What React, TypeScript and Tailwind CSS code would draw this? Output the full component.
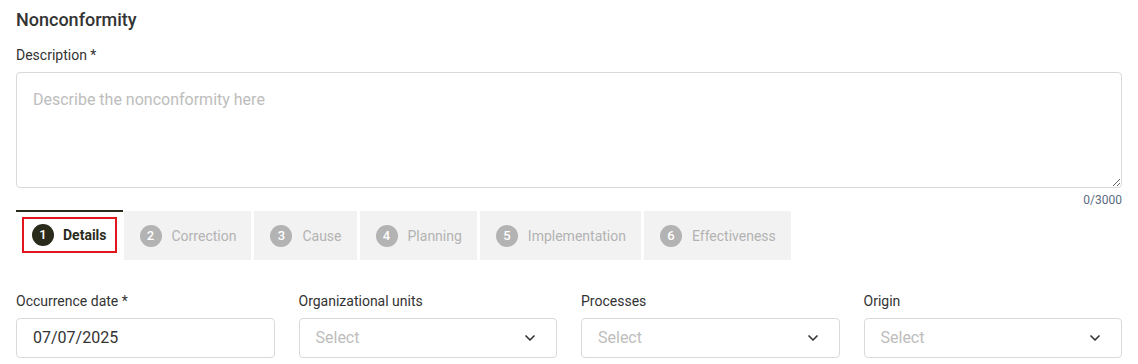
import { ChevronDown } from "lucide-react"

const steps = ["Details", "Correction", "Cause", "Planning", "Implementation", "Effectiveness"]

const SelectBox = ({ label }: { label: string }) => (
   <div className="flex flex-col">
      <label className="text-sm leading-5 text-[#333] mb-[7px]">{label}</label>
      <div className="h-10 border border-[#d9d9d9] rounded flex items-center justify-between pl-4 pr-[18px]">
         <span className="text-base text-[#bdbdbd]">Select</span>
         <ChevronDown size={16} strokeWidth={2.5} className="text-[#333]" />
      </div>
   </div>
)

const App = () => {
   return (
      <main className="w-full bg-white px-4 pt-1.5 font-['Roboto',sans-serif]">
         <h2 className="text-lg leading-7 font-medium text-[#333]">Nonconformity</h2>

         <label className="block mt-[11px] mb-[7px] text-sm leading-5 text-[#333]">Description *</label>
         <textarea
            className="block w-full h-[116px] border border-[#d9d9d9] rounded px-4 py-[15px] text-base text-[#333] placeholder:text-[#bdbdbd] outline-none resize-y"
            placeholder="Describe the nonconformity here"
         />
         <p className="mt-1 text-right text-xs leading-4 text-[#5b6b82]">0/3000</p>

         {/* step tabs */}
         <div className="mt-0.5 flex items-start">
            {steps.map((step, i) => {
               if (i === 0) {
                  return (
                     <div key={step} className="h-[51px] border-t-2 border-[#2b2b1c] bg-white px-1.5 pt-[5px]">
                        <div className="h-9 border-2 border-[#e3151c] flex items-center gap-[9px] px-2">
                           <span className="w-[22px] h-[22px] rounded-full bg-[#2b2b1c] text-white text-[13px] font-medium flex items-center justify-center">{i + 1}</span>
                           <span className="text-sm font-bold text-[#2b2b1c]">{step}</span>
                        </div>
                     </div>
                  )
               }
               return (
                  <div
                     key={step}
                     className={`${i === 1 ? "ml-px" : "ml-[3px]"} mt-px h-[49px] bg-[#f2f2f2] flex items-center gap-2.5 pl-4 pr-[15px]`}
                  >
                     <span className="w-[22px] h-[22px] rounded-full bg-[#b3b3b3] text-white text-[13px] font-medium flex items-center justify-center">{i + 1}</span>
                     <span className="text-sm text-[#b3b3b3]">{step}</span>
                  </div>
               )
            })}
         </div>

         <div className="mt-[30px] grid grid-cols-4 gap-6">
            <div className="flex flex-col">
               <label className="text-sm leading-5 text-[#333] mb-[7px]">Occurrence date *</label>
               <div className="h-10 border border-[#d9d9d9] rounded flex items-center px-4">
                  <span className="text-base text-[#333]">07/07/2025</span>
               </div>
            </div>
            <SelectBox label="Organizational units" />
            <SelectBox label="Processes" />
            <SelectBox label="Origin" />
         </div>
      </main>
   )
}

export default App
